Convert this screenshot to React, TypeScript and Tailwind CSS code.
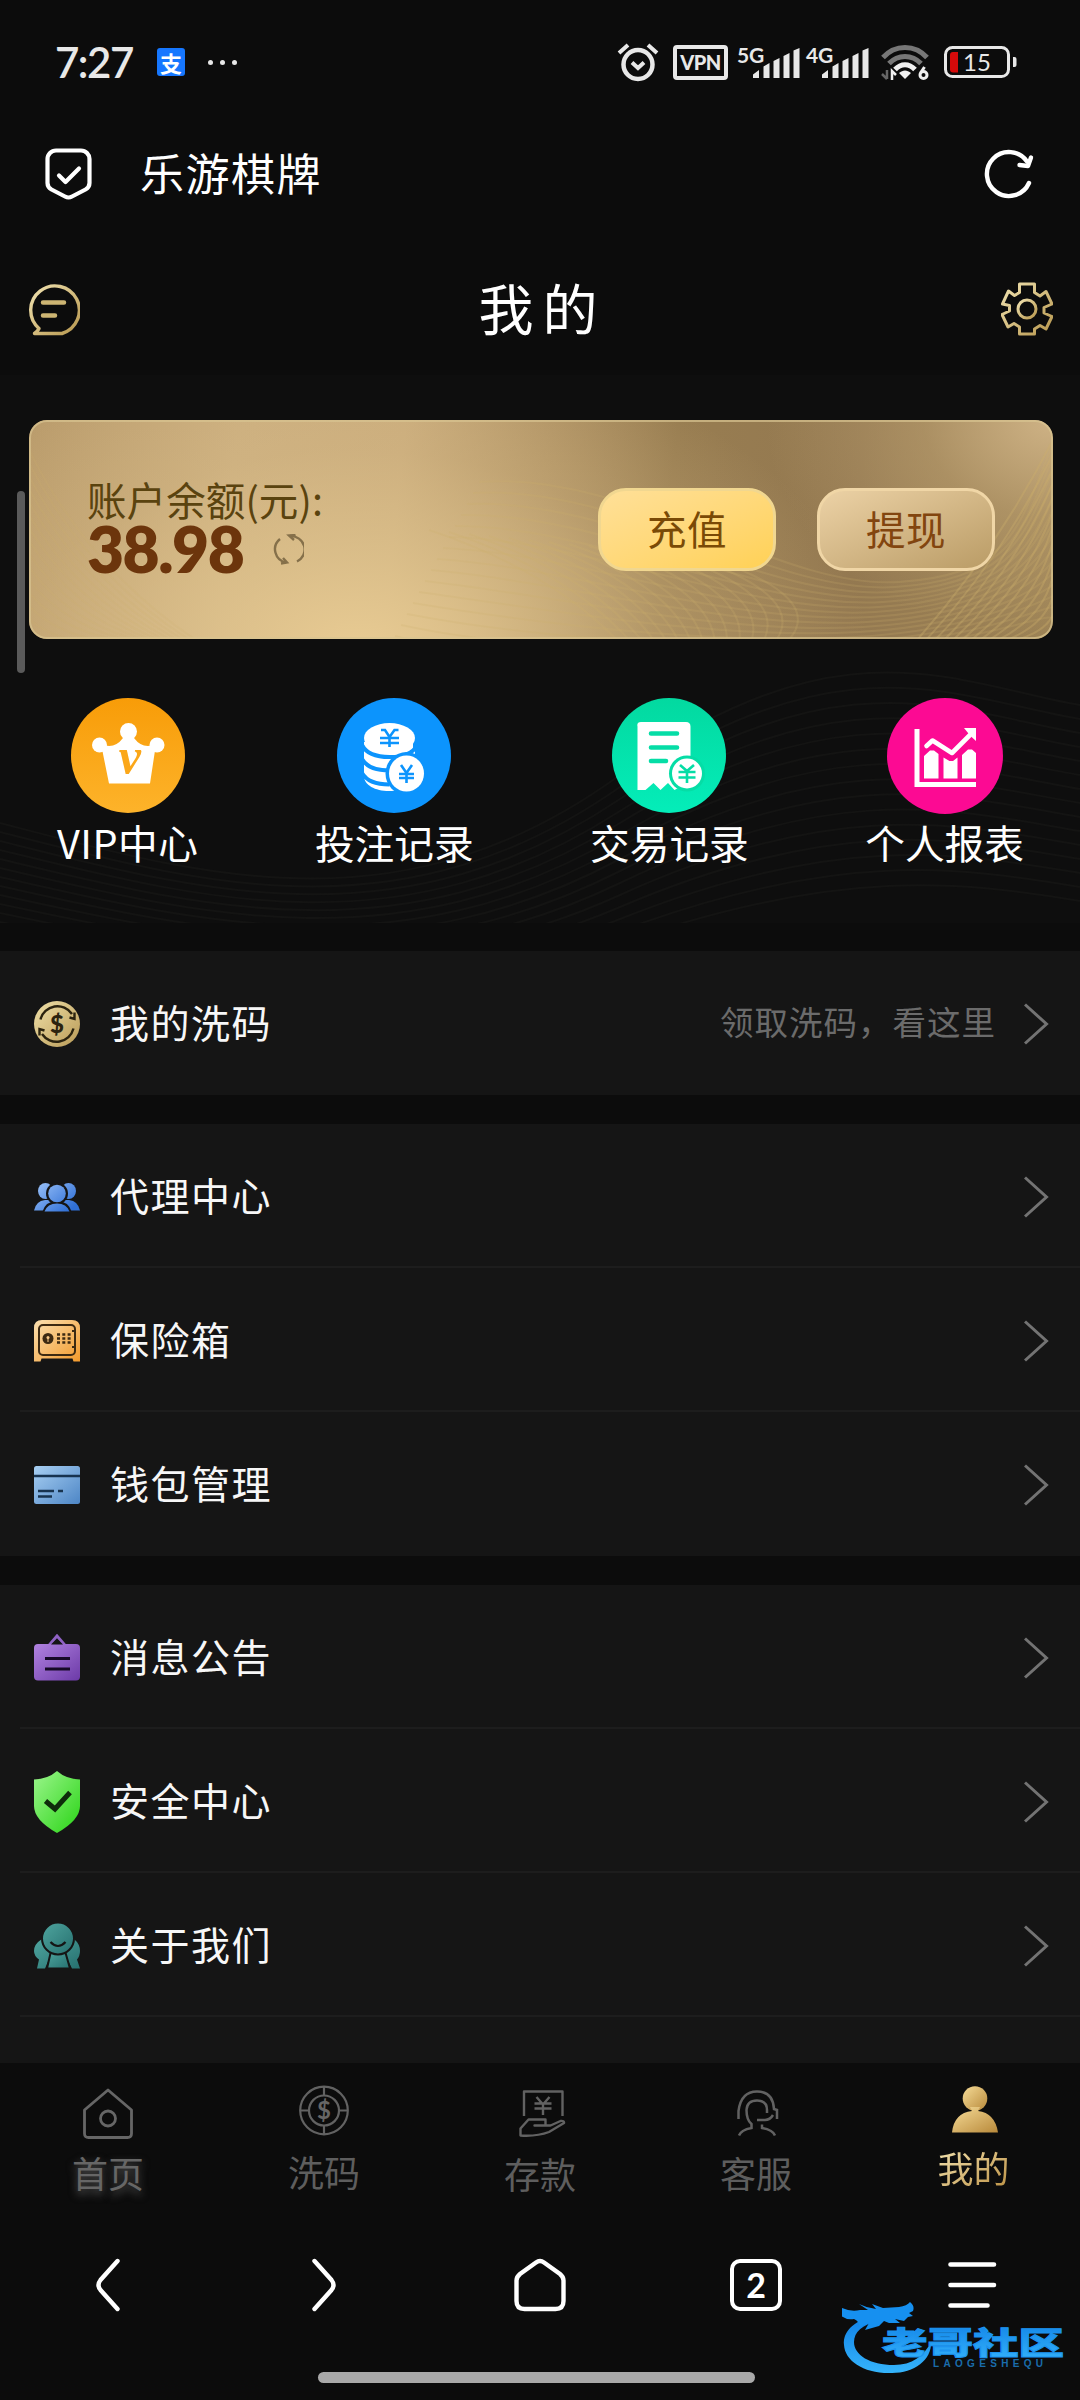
import type { ReactNode } from "react";

interface GradientProps {
  id: string;
  from: string;
  to: string;
}

const Gradient = ({ id, from, to }: GradientProps) => (
  <linearGradient id={id} x1="0" y1="0" x2="1" y2="1">
    <stop offset="0" stopColor={from} />
    <stop offset="1" stopColor={to} />
  </linearGradient>
);

const GradientDefs = () => (
  <svg width="0" height="0" className="absolute">
    <defs>
      <Gradient id="gold" from="#f0e2b0" to="#b8984f" />
      <Gradient id="coin" from="#efe0a8" to="#b99a56" />
      <linearGradient id="people" gradientUnits="userSpaceOnUse" x1="8" y1="0" x2="34" y2="30">
        <stop offset="0" stopColor="#93bcf6" />
        <stop offset="1" stopColor="#2f6fd6" />
      </linearGradient>
      <Gradient id="safe" from="#fbe0b0" to="#f39a2c" />
      <Gradient id="bank" from="#a8cff2" to="#4d86c6" />
      <Gradient id="notice" from="#b183e0" to="#6c3aa8" />
      <Gradient id="shield" from="#9bf58c" to="#2ad416" />
      <Gradient id="about" from="#4fa59f" to="#26706f" />
      <Gradient id="user" from="#f6dc98" to="#b8893a" />
      <linearGradient id="brand" x1="0" y1="0" x2="0" y2="1">
        <stop offset="0" stopColor="#0f7fe6" />
        <stop offset="1" stopColor="#35b4fb" />
      </linearGradient>
    </defs>
  </svg>
);

const SignalBars = () => (
  <svg width="47" height="30" viewBox="0 0 47 30" fill="#e8e8e8">
    <path d="M0 30v-3.500l6-4.500v8zM10.500 30V18.500l6-3.500v15zM20.500 30V13l6-3v20zM30.500 30V8l6-3v25zM40.500 30V2.500L46.500 0v30z" />
  </svg>
);

const Signal = ({ label }: { label: string }) => (
  <div className="relative h-[36px] w-[63px]">
    <span className="absolute left-0 top-0 font-['Lato'] text-[21px] leading-[21px] font-bold tracking-[-0.3px] text-[#e8e8e8]">
      {label}
    </span>
    <div className="absolute right-0 bottom-[2px]">
      <SignalBars />
    </div>
  </div>
);

const StatusBar = () => (
  <div className="flex h-[124px] items-center pl-[55px] pr-[62px] text-[#e8e8e8]">
    <span className="w-[79px] font-['Lato'] text-[42px] leading-[42px] font-semibold tracking-[-1.500px]">7:27</span>
    <div className="ml-[23px] flex size-[28px] items-center justify-center rounded-[3px] bg-[#1677ff] text-[22px] leading-[22px] font-bold text-white">
      支
    </div>
    <div className="ml-[23px] flex gap-[7px]">
      <i className="size-[5px] rounded-full bg-[#e8e8e8]" />
      <i className="size-[5px] rounded-full bg-[#e8e8e8]" />
      <i className="size-[5px] rounded-full bg-[#e8e8e8]" />
    </div>
    <div className="ml-auto flex items-center">
      <svg width="42" height="40" viewBox="0 0 42 40" fill="none" stroke="#e8e8e8" strokeWidth="4.500">
        <circle cx="21" cy="22.500" r="14.500" />
        <path d="M2 11l9-8M40 11l-9-8" strokeWidth="4" />
        <path d="M15 20.500l6 5.500 6-5.500" strokeWidth="4" />
      </svg>
      <div className="ml-[14px] flex h-[35px] w-[55px] items-center justify-center rounded-[4px] border-4 border-[#e8e8e8] font-['Lato'] text-[20px] leading-none font-black tracking-[-0.5px]">
        VPN
      </div>
      <div className="ml-[9px]">
        <Signal label="5G" />
      </div>
      <div className="ml-[6px]">
        <Signal label="4G" />
      </div>
      <svg className="ml-[12px]" width="50" height="38" viewBox="0 0 50 38" fill="none" strokeWidth="5">
        <path d="M2 14.500C14 1 34 1 46 14.500" stroke="#777" />
        <path d="M8 20.500C17 11 31 11 40 20.500" stroke="#777" />
        <path d="M14 26.500c6-6.500 14-6.500 20 0" stroke="#f0f0f0" />
        <path d="M18 30c4-3.500 8-3.500 12 0l-6 6z" fill="#f0f0f0" stroke="none" />
        <path d="M6 27v9M1 31l5 5" stroke="#666" strokeWidth="2.500" />
        <path d="M11 37v-9l4 4" stroke="#f0f0f0" strokeWidth="2.500" />
        <circle cx="42.500" cy="32" r="3.500" stroke="#f0f0f0" strokeWidth="3" />
        <path d="M39.500 30l4-6" stroke="#f0f0f0" strokeWidth="3" />
      </svg>
      <svg className="ml-[13px]" width="74" height="34" viewBox="0 0 74 34">
        <rect x="1.500" y="2.500" width="63" height="29" rx="7" fill="none" stroke="#e8e8e8" strokeWidth="3" />
        <path d="M69 12h1.500a2 2 0 0 1 2 2v6a2 2 0 0 1-2 2H69z" fill="#e8e8e8" />
        <path d="M9 7h5v20.500H9a3 3 0 0 1-3-3V10a3 3 0 0 1 3-3z" fill="#d60a0a" />
        <text x="33" y="25.500" textAnchor="middle" className="font-['Lato'] text-[24px]" fill="#e8e8e8">
          15
        </text>
      </svg>
    </div>
  </div>
);

const BrowserBar = () => (
  <div className="flex h-[100px] items-center pl-[45px] pr-[45px]">
    <svg width="47" height="52" viewBox="0 0 47 52" fill="none" stroke="#fff" strokeWidth="4.200" strokeLinecap="round" strokeLinejoin="round">
      <path d="M11 2.500h25a8.500 8.500 0 0 1 8.500 8.500v24c0 3-1.500 5-4 6.500L27 48.500q-3.500 2-7 0L6.500 41.500c-2.500-1.500-4-3.500-4-6.500V11A8.500 8.500 0 0 1 11 2.500z" />
      <path d="M14 27.500l6.500 6.500L34 20.500" />
    </svg>
    <span className="ml-[48px] pb-[4px] text-[44px] leading-[60px] tracking-[1.500px] text-white">乐游棋牌</span>
    <svg className="ml-auto" width="52" height="52" viewBox="0 0 52 52" fill="none" stroke="#fff" strokeWidth="4.400" strokeLinecap="round" strokeLinejoin="round">
      <path d="M46 35A22 22 0 1 1 44 13.500" />
      <path d="M36.500 17l8.500 1 3-8.500" />
    </svg>
  </div>
);

const PageHeader = () => (
  <header className="flex h-[151px] items-center justify-between pl-[28px] pr-[27px] pt-[18px]">
    <svg width="52" height="54" viewBox="0 0 52 54" fill="none" stroke="url(#gold)" strokeWidth="3.400" strokeLinejoin="round">
      <path d="M11 46.500A24.300 24.300 0 1 1 34 51.500H6.500Q10 49 11 46.500z" />
      <path d="M15 20.500h21M15 33.500h12" strokeWidth="4.500" strokeLinecap="round" stroke="#cdb573" />
    </svg>
    <h1 className="pb-[6px] pl-[4px] text-[55px] leading-[70px] tracking-[9px] text-white">我的</h1>
    <svg width="52" height="54" viewBox="0 0 52 54" fill="none" stroke="url(#gold)" strokeWidth="3" strokeLinejoin="round">
      <path d="M18.500 2h15v8.500l5.500 3.500 6-4.500 6 12.500-8 3.500v5.500l8 3.500-6 12.500-6-3.500-5.500 3.500V52h-15v-7l-5.500-3.500-6 3.500-6-12.500 7.500-3.500v-5.500L1.500 22 7.500 9l6 4.500 5-3z" />
      <circle cx="26" cy="27" r="9" />
    </svg>
  </header>
);

const fan = Array.from({ length: 15 }, (_, i) => i);

const CardWaves = () => (
  <svg className="absolute inset-0" width="1024" height="218" viewBox="0 0 1024 218" fill="none" stroke="#cdb06c" strokeWidth="2">
    <g opacity="0.200">
      {fan.map((i) => (
        <path key={i} d={`M${450 - i * 6} ${62 + i * 11}C${600 - i * 8} ${50 + i * 14} ${750 - i * 6} ${170 + i * 5} ${870 - i * 4} ${162 + i * 5}S${990 + i * 3} ${100 + i * 6} ${1026} ${20 + i * 13}`} />
      ))}
    </g>
    <g opacity="0.220">
      {fan.map((i) => (
        <path key={i} d={`M${400 + i * 20} ${110 + i * 2}Q${520 + i * 20} ${150 + i * 2} ${590 + i * 12} 222`} />
      ))}
    </g>
    <g opacity="0.350">
      {fan.map((i) => (
        <path key={i} d={`M${888 + i * 9} 220Q${968 + i * 6} ${130 + i * 7} 1026 ${16 + i * 14}`} />
      ))}
    </g>
    <g opacity="0.140">
      {fan.map((i) => (
        <path key={i} d={`M0 ${30 + i * 13}Q${60 - i * 2} ${150 + i * 6} ${170 - i * 6} 222`} />
      ))}
    </g>
  </svg>
);

const PanelWaves = () => (
  <svg className="absolute inset-0" width="1080" height="548" viewBox="0 0 1080 548" fill="none" stroke="#141413" strokeWidth="2">
    {fan.map((i) => (
      <path key={i} d={`M0 ${448 + i * 9}C200 ${500 + i * 8} 400 ${560 + i * 6} 620 ${400 + i * 12}S960 ${310 + i * 14} 1080 ${330 + i * 14}`} />
    ))}
  </svg>
);

const BalanceCard = () => (
  <section className="relative mt-[45px] ml-[29px] flex h-[219px] w-[1024px] items-center overflow-hidden rounded-[18px] bg-[radial-gradient(ellipse_50%_140%_at_32%_105%,#e8cb93_0%,#e2c68fb0_30%,#d8bb8550_65%,transparent_100%),radial-gradient(ellipse_28%_100%_at_100%_0%,#ceb285_0%,#c0a47480_45%,transparent_100%),linear-gradient(96deg,#b99b6b_0%,#cbae7f_20%,#c9ab7c_36%,#af9264_50%,#987d51_62%,#937850_80%,#9c8255_100%)]">
    <CardWaves />
    <div className="absolute inset-0 rounded-[18px] border-2 border-[#d9c592]/70" />
    <div className="relative ml-[58px] h-[155px] w-[511px] pt-[22px]">
      <div className="text-[39.500px] leading-[50px] tracking-[0.100px] text-[#5a430f]">账户余额(元):</div>
      <div className="-mt-[2px] flex items-center">
        <span className="w-[186px] font-['Lato'] text-[64px] leading-[54px] font-extrabold tracking-[-1.500px] text-[#6c350c]">38.98</span>
        <svg width="31" height="31" viewBox="0 0 31 31" fill="none" stroke="#85704a" strokeWidth="2.400">
          <path d="M7 5A14 13.500 0 0 0 13 28.500M24 27.500A14 13.500 0 0 0 17 2" />
          <path d="M21 6l-5-4.500 6.500-.500M10 24l4 4.500-6 1" />
        </svg>
      </div>
    </div>
    <button className="relative h-[83px] w-[178px] rounded-[28px] border-3 border-[#f1d790] bg-linear-to-br from-[#ffe098] to-[#ffd155] pb-1 text-[39.500px] tracking-[0.500px] text-[#7a4a06]">
      充值
    </button>
    <button className="relative ml-[41px] h-[83px] w-[178px] rounded-[28px] border-3 border-[#f0d6a6] bg-linear-to-br from-[#ecd2a6] to-[#ba9c66] pb-1 text-[39.500px] tracking-[0.500px] text-[#82450f]">
      提现
    </button>
  </section>
);

const VipIcon = () => (
  <svg width="114" height="115" viewBox="0 0 114 115">
    <defs>
      <linearGradient id="vip" x1="0" y1="0" x2="0" y2="1">
        <stop offset="0" stopColor="#f89c08" />
        <stop offset="1" stopColor="#fdb32a" />
      </linearGradient>
    </defs>
    <ellipse cx="57" cy="57.500" rx="57" ry="57.500" fill="url(#vip)" />
    <g fill="#fff">
      <circle cx="28.500" cy="47" r="7.500" />
      <circle cx="57.500" cy="33.500" r="8.500" />
      <circle cx="86" cy="47" r="7.500" />
      <path d="M30 46Q43 52 52 40h11Q72 52 85 46l-6 39.500H38z" />
    </g>
    <text x="59" y="75" textAnchor="middle" className="font-['Liberation_Serif'] text-[50px] font-bold italic" fill="#fba719">
      v
    </text>
  </svg>
);

const BetIcon = () => (
  <svg width="114" height="115" viewBox="0 0 114 115">
    <ellipse cx="57" cy="57.500" rx="57" ry="57.500" fill="#0c94fd" />
    <path d="M27 44v34c0 9 11 15 25 15s26-6 26-15V44z" fill="#fff" />
    <g fill="none" stroke="#0c94fd" strokeWidth="4">
      <path d="M25 47c4 8 14 12 27.500 12S76 56 80 47" />
      <path d="M25 61c4 7 14 11.500 27.500 11.500" />
      <path d="M25 75c4 7 14 11.500 27.500 11.500" />
      <path d="M77 44v8" strokeWidth="2" />
    </g>
    <ellipse cx="52.500" cy="40" rx="25.500" ry="15" fill="#fff" />
    <g fill="none" stroke="#0c94fd" strokeWidth="2.600">
      <path d="M44 32h4l4.500 7 5-7h4M43 40h19M43 45h19M52.500 39v10" />
    </g>
    <ellipse cx="69.500" cy="75.500" rx="21" ry="21.500" fill="#0c94fd" />
    <ellipse cx="69.500" cy="75.500" rx="17.500" ry="18" fill="#fff" />
    <path d="M64 67l5.500 8 5.500-8M62 76h15M62 80h15M69.500 75v10" fill="none" stroke="#0c94fd" strokeWidth="2.600" />
  </svg>
);

const TradeIcon = () => (
  <svg width="114" height="115" viewBox="0 0 114 115">
    <defs>
      <linearGradient id="trade" x1="0" y1="0" x2="0" y2="1">
        <stop offset="0" stopColor="#03d9a0" />
        <stop offset="1" stopColor="#04edb9" />
      </linearGradient>
    </defs>
    <ellipse cx="57" cy="57.500" rx="57" ry="57.500" fill="url(#trade)" />
    <path d="M29 24h45q4.500 0 4.500 4.500V88l-7-1-9 5-6.500-7-7.500 7-7-7-8 7-8 0V28.500Q24.500 24 29 24z" fill="#fff" />
    <path d="M39 35.500h26M39 49.500h26M39 63h15" stroke="#05dda6" strokeWidth="4.600" strokeLinecap="round" />
    <circle cx="75" cy="75.500" r="18" fill="#05dda6" />
    <circle cx="75" cy="75.500" r="15" fill="#fff" />
    <path d="M68 67l7 6 7-6M66.500 74h17M66.500 79.500h17M75 73v12" fill="none" stroke="#05dda6" strokeWidth="2.600" />
  </svg>
);

const ReportIcon = () => (
  <svg width="116" height="116" viewBox="0 0 116 116">
    <circle cx="58" cy="58" r="58" fill="#fc0a93" />
    <g fill="none" stroke="#fff">
      <path d="M30 31v55.500h59" strokeWidth="5" />
      <path d="M39.500 48l6-5.500L65 55l18-18" strokeWidth="4.600" strokeLinecap="round" strokeLinejoin="round" />
    </g>
    <path d="M77 30h12v13l-5.500-5zM37 58l6-5.500h4L51.500 56v24.500H37zM56.500 59.500l6 3.500h3.500l4.500-3.500v21h-14zM75 57l6-5.500h4l4 3.500v25.500H75z" fill="#fff" />
  </svg>
);

const shortcuts: { label: string; icon: ReactNode }[] = [
  { label: "VIP中心", icon: <VipIcon /> },
  { label: "投注记录", icon: <BetIcon /> },
  { label: "交易记录", icon: <TradeIcon /> },
  { label: "个人报表", icon: <ReportIcon /> },
];

const Shortcuts = () => (
  <nav className="relative mt-[58px] flex justify-between pl-[57px] pr-[56px]">
    {shortcuts.map(({ label, icon }) => (
      <a key={label} className="flex flex-col items-center text-[39.700px] leading-[56px] text-white first:tracking-[0.500px]">
        <span className="flex h-[117px] items-center">{icon}</span>
        {label}
      </a>
    ))}
  </nav>
);

const WashIcon = () => (
  <svg width="46" height="46" viewBox="0 0 46 46">
    <circle cx="23" cy="23" r="23" fill="url(#coin)" />
    <g fill="none" stroke="#2b230f" strokeWidth="2.400">
      <path d="M6.500 18.500A17.500 17.500 0 0 1 38 13M39.500 27.500A17.500 17.500 0 0 1 8 33" />
      <path d="M40.500 11.500v6.500l-5-1.500M5.500 34.500V28l5 1.500" />
    </g>
    <text x="23" y="31.500" textAnchor="middle" className="font-['Lato'] text-[24px] font-black" fill="#2b230f">
      $
    </text>
  </svg>
);

const AgentIcon = () => (
  <svg width="46" height="30" viewBox="0 0 46 30" fill="url(#people)">
    <ellipse cx="11.500" cy="9" rx="7.500" ry="8" />
    <ellipse cx="34.500" cy="9" rx="7.500" ry="8" />
    <path d="M0 28.500Q2 19 11 18h24q9 1 11 10.500z" />
    <path d="M8 31q3-12 15-12t15 12z" fill="#151515" />
    <circle cx="23" cy="11.500" r="11" fill="#151515" />
    <circle cx="23" cy="11.500" r="8.800" />
    <path d="M10.500 29.500q3-8 12.500-8t12.500 8z" />
  </svg>
);

const SafeIcon = () => (
  <svg width="46" height="42" viewBox="0 0 46 42">
    <path d="M8 0h30q8 0 8 8v33.500h-6.500l-1-3h-31l-1 3H0V8Q0 0 8 0z" fill="url(#safe)" />
    <rect x="5" y="5" width="36" height="30" rx="4" fill="none" stroke="#3d2a12" strokeWidth="2" />
    <circle cx="14" cy="18.500" r="5.500" fill="#3d2a12" />
    <circle cx="14" cy="17.500" r="1.500" fill="#f9c988" />
    <path d="M13.500 18h1v4h-1z" fill="#f9c988" />
    <path d="M23 14.500h14M23 18.500h14M23 22.500h14" stroke="#3d2a12" strokeWidth="2.600" strokeDasharray="3 2.300" />
    <path d="M41 11h-3M41 27h-3" stroke="#3d2a12" strokeWidth="2" />
  </svg>
);

const WalletIcon = () => (
  <svg width="46" height="38" viewBox="0 0 46 38">
    <rect width="46" height="38" rx="2.500" fill="url(#bank)" />
    <path d="M0 10h46M4 25h16M24 25h5M4 30.500h14" stroke="#17334f" strokeWidth="2.400" />
  </svg>
);

const NoticeIcon = () => (
  <svg width="46" height="47" viewBox="0 0 46 47">
    <path d="M14.500 12L23 2l8.500 10" fill="none" stroke="#8f62c4" strokeWidth="3" />
    <rect y="10" width="46" height="36.500" rx="4" fill="url(#notice)" />
    <path d="M23 4.500l6 6H17z" fill="#151515" />
    <path d="M11 24.500h25M11 35h25" stroke="#160a26" strokeWidth="3" />
  </svg>
);

const SecurityIcon = () => (
  <svg width="46" height="62" viewBox="0 0 46 62">
    <path d="M23 0q9 8 23 8.500V35q0 14-23 27Q0 49 0 35V8.500Q14 8 23 0z" fill="url(#shield)" />
    <path d="M11.500 30l9.500 8L36 21.500" fill="none" stroke="#0e2b0b" strokeWidth="5" />
  </svg>
);

const AboutIcon = () => (
  <svg width="46" height="46" viewBox="0 0 46 46">
    <path d="M8 16Q0 21 0 28q0 5 5 8.500L3 45.500h8l6-14zM40 16q6 5 6 12 0 5-3 8.500l3 9h-8l-7-14z" fill="url(#about)" />
    <path d="M17 28L13 45.500h23L31 28z" fill="url(#about)" stroke="#151515" strokeWidth="2" />
    <circle cx="24" cy="15.500" r="16" fill="url(#about)" stroke="#151515" strokeWidth="2" />
    <path d="M16.500 19q7.500 8 15 0" fill="none" stroke="#151515" strokeWidth="2.200" />
  </svg>
);

interface RowItem {
  label: string;
  icon: ReactNode;
  hint?: string;
}

const groups: RowItem[][] = [
  [{ label: "我的洗码", icon: <WashIcon />, hint: "领取洗码，看这里" }],
  [
    { label: "代理中心", icon: <AgentIcon /> },
    { label: "保险箱", icon: <SafeIcon /> },
    { label: "钱包管理", icon: <WalletIcon /> },
  ],
  [
    { label: "消息公告", icon: <NoticeIcon /> },
    { label: "安全中心", icon: <SecurityIcon /> },
    { label: "关于我们", icon: <AboutIcon /> },
  ],
];

const Row = ({ label, icon, hint }: RowItem) => (
  <li className="ml-[20px] flex h-[144px] items-center border-b-2 border-[#1d1d1d] pt-[3px] pl-[14px] pr-[31px] last:border-transparent group-last:last:border-[#1d1d1d]">
    {icon}
    <span className="ml-[30px] pb-[6px] text-[39px] leading-[56px] tracking-[1.500px] text-[#f7f7f7]">{label}</span>
    {hint && <span className="mr-[28px] ml-auto pb-[6px] text-[33.500px] leading-[50px] tracking-[1px] text-[#6b6b6b]">{hint}</span>}
    <svg className={hint ? "" : "ml-auto"} width="25" height="42" viewBox="0 0 25 42" fill="none" stroke="#737373" strokeWidth="3">
      <path d="M1 1.500L22.500 21 1 40.500" />
    </svg>
  </li>
);

const HomeTab = () => (
  <svg width="50" height="51" viewBox="0 0 50 51" fill="none" stroke="#666" strokeWidth="2.800" strokeLinejoin="round">
    <path d="M25 2L48.500 22v23.500q0 4-4 4h-39q-4 0-4-4V22z" />
    <circle cx="25" cy="30.500" r="7.500" />
  </svg>
);

const WashTab = () => (
  <svg width="50" height="51" viewBox="0 0 50 51" fill="none" stroke="#626262" strokeWidth="2.200">
    <circle cx="25" cy="25.500" r="23.800" />
    <circle cx="25" cy="25.500" r="15" />
    <path d="M25 2v9M25 40v9M1 25.500h9M40 25.500h9" />
    <text x="25" y="34" textAnchor="middle" stroke="none" className="font-['Lato'] text-[24px] font-bold" fill="#666">
      $
    </text>
  </svg>
);

const DepositTab = () => (
  <svg className="ml-[5px]" width="47" height="47" viewBox="0 0 47 47" fill="none" stroke="#626262" strokeWidth="2.400" strokeLinejoin="round">
    <path d="M5 26V1.500h38.500V26" />
    <path d="M17.500 7l6.500 7.500L30.500 7M15.500 13.500h17M15.500 18.500h17M24 14v11" />
    <path d="M1.500 45.500V38.500L9.500 29.500h17v6H15.500h16l10-4.500q4-.500 3.500 2L30 42q-12 4.500-28.500 3.500z" />
  </svg>
);

const ServiceTab = () => (
  <svg className="ml-[3px]" width="42" height="47" viewBox="0 0 42 47" fill="none" stroke="#626262" strokeWidth="2.500">
    <path d="M1.500 29v-8Q4 1.500 20 1.500T37 19l3 1v9" />
    <path d="M30 23V20Q30 10.500 20 10.500T9.500 20q0 10 5 14v4Q4 40 2 45.500" />
    <path d="M20 30h8q5 0 8-5M25 34.500V38q11 2 13 7.500" />
  </svg>
);

const MineTab = () => (
  <svg className="ml-[2px]" width="46" height="47" viewBox="0 0 46 47" fill="url(#user)">
    <circle cx="23" cy="12.500" r="12.300" />
    <path d="M18 21h10l-2 4q17 2 20 21.500H0Q2 27 20 25z" />
  </svg>
);

const tabs = [
  { label: "首页", icon: <HomeTab />, box: "pt-[25px]", text: "mt-[7px] text-[#666] [text-shadow:0_4px_8px_#555]" },
  { label: "洗码", icon: <WashTab />, box: "pt-[22px]", text: "mt-[9px] text-[#5e5e5e]" },
  { label: "存款", icon: <DepositTab />, box: "pt-[27px]", text: "mt-[10px] text-[#5e5e5e]" },
  { label: "客服", icon: <ServiceTab />, box: "pt-[27px]", text: "mt-[9px] text-[#5e5e5e]" },
  {
    label: "我的",
    icon: <MineTab />,
    box: "pt-[23px] pl-[3px]",
    text: "mt-[8px] bg-linear-to-br from-[#f7eab8] to-[#b98d3c] bg-clip-text text-transparent",
  },
];

const TabBar = () => (
  <nav className="grid h-[157px] shrink-0 grid-cols-5 bg-[#0c0c0c]">
    {tabs.map(({ label, icon, box, text }) => (
      <a key={label} className={`flex flex-col items-center ${box}`}>
        {icon}
        <span className={`text-[36px] leading-[52px] ${text}`}>{label}</span>
      </a>
    ))}
  </nav>
);

const BrowserNav = () => (
  <nav className="grid h-[130px] shrink-0 grid-cols-5 items-center justify-items-center">
    <svg width="24" height="54" viewBox="0 0 24 54" fill="none" stroke="#fff" strokeWidth="4.400" strokeLinecap="round">
      <path d="M21.500 3L4.500 22q-4 5 0 10l17 19" />
    </svg>
    <svg width="24" height="54" viewBox="0 0 24 54" fill="none" stroke="#fff" strokeWidth="4.400" strokeLinecap="round">
      <path d="M2.500 3l17 19q4 5 0 10l-17 19" />
    </svg>
    <svg width="52" height="54" viewBox="0 0 52 54" fill="none" stroke="#fff" strokeWidth="4.400">
      <path d="M22 4.500L6 16q-3.500 3-3.500 6.500V43q0 8 8 8h31q8 0 8-8V22.500Q49.500 19 46 16L30 4.500q-4-3-8 0z" />
    </svg>
    <div className="flex size-[52px] items-center justify-center rounded-[10px] border-[4.500px] border-white font-['Lato'] text-[34px] leading-none font-bold text-white">
      2
    </div>
    <svg width="50" height="48" viewBox="0 0 50 48" stroke="#fff" strokeWidth="4.600" strokeLinecap="round">
      <path d="M3.500 3.500h43.500M3.500 24h43.500M3.500 44.500h37" />
    </svg>
  </nav>
);

const BrandMark = () => (
  <svg className="absolute top-[2298px] left-[842px]" width="226" height="80" viewBox="0 0 226 80">
    <path d="M32 17C10 24 1 34 2 47 3 63 22 76 50 75 72 75 90 62 89 44 82 58 70 67 52 67 28 67 12 57 12 44 12 34 20 27 36 23z" fill="url(#brand)" />
    <path d="M0 10q9 4 18 2l8 0-9-6q8 4 17 5l-4-5 11 4 16-1q8-1 11-5 5 4 3 9l-4 2 4 3-5 1-4 4-9-2 5 4-11 0-5-2-5 5-14 4 4-7-9 4q-1-6-6-8-9 2-17-7z" fill="#1690f0" />
    <text x="40" y="56" textLength="182" lengthAdjust="spacingAndGlyphs" className="text-[31px] font-black" fill="url(#brand)" stroke="#1c93ef" strokeWidth="1">
      老哥社区
    </text>
    <text x="91" y="68.500" textLength="110" className="font-['Liberation_Sans'] text-[10px] font-bold" fill="#1a6cab">
      LAOGESHEQU
    </text>
  </svg>
);

const App = () => (
  <div className="relative flex h-[2400px] w-[1080px] flex-col overflow-hidden bg-[#0c0c0c] font-['Noto_Sans_CJK_SC',sans-serif]">
    <GradientDefs />
    <StatusBar />
    <BrowserBar />
    <PageHeader />
    <main className="flex h-[1688px] shrink-0 flex-col overflow-hidden">
      <div className="relative flow-root h-[548px] shrink-0 bg-[#0e0e0e]">
        <PanelWaves />
        <BalanceCard />
        <Shortcuts />
      </div>
      <div className="flex flex-1 flex-col gap-[29px] pt-[28px]">
        {groups.map((items) => (
          <ul key={items[0].label} className="group shrink-0 bg-[#151515] last:grow">
            {items.map((item) => (
              <Row key={item.label} {...item} />
            ))}
          </ul>
        ))}
      </div>
    </main>
    <TabBar />
    <BrowserNav />
    <div className="mt-[22px] ml-[318px] h-[11px] w-[437px] rounded-full bg-[#a9a9a9]" />
    <div className="absolute top-[491px] left-[17px] h-[182px] w-[8px] rounded-full bg-[#5a5a5a]" />
    <BrandMark />
  </div>
);

export default App;
